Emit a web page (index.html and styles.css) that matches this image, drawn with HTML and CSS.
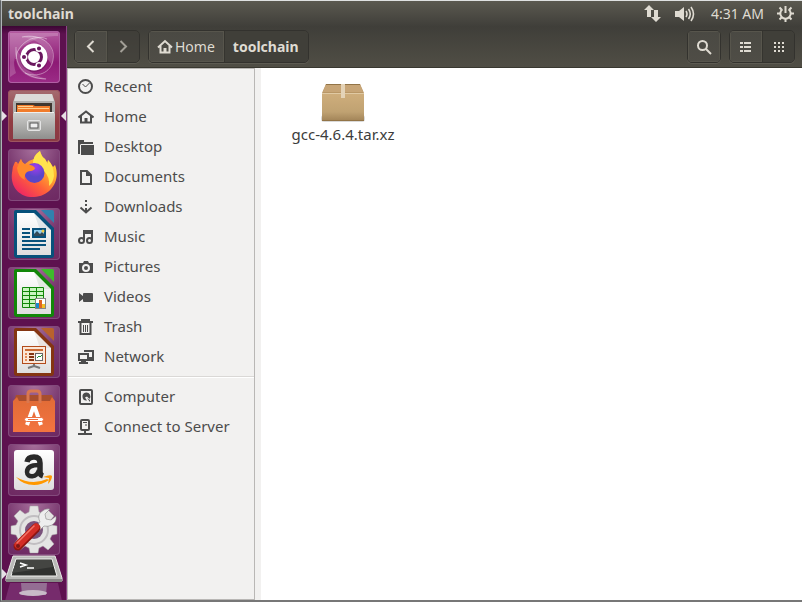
FILE: index.html
```html
<!DOCTYPE html>
<html lang="en">
<head>
    <meta charset="UTF-8">
    <meta name="viewport" content="width=device-width, initial-scale=1.0">
    <title>toolchain</title>
    <link rel="stylesheet" href="styles.css">
</head>
<body>
<div class="screen">

    <!-- Top panel -->
    <header class="panel">
        <h1 class="panel-title">toolchain</h1>
        <svg class="ind-network" width="17" height="17" viewBox="0 0 17 17" fill="#dfdbd2"><path d="M5 0l5 5H7v7H3V5H0zM12 17l-5-5h3V5h4v7h3z"/></svg>
        <svg class="ind-sound" width="20" height="16" viewBox="0 0 20 16"><path fill="#dfdbd2" d="M0 5h4l5-4v14l-5-4H0z"/><path fill="none" stroke="#dfdbd2" stroke-width="1.6" d="M11 5q2 3 0 6M13.500 3q3.500 5 0 10M16 1q5 7 0 14"/></svg>
        <time class="clock">4:31 AM</time>
        <svg class="ind-session" width="17" height="17" viewBox="0 0 17 17" fill="none" stroke="#dfdbd2"><path stroke-width="2" d="M5.500 4.300a5.200 5.200 0 1 0 6 0M8.500 1v7"/><path stroke-width="2" d="M0 8.500h3M14 8.500h3M8.500 14v3M2.500 2.500l2 2M14.500 2.500l-2 2M2.500 14.500l2-2M14.500 14.500l-2-2"/></svg>
    </header>

    <div class="desktop">

        <!-- Launcher -->
        <nav class="launcher">
            <button class="tile tile-dash" aria-label="Search your computer">
                <svg width="52" height="52" viewBox="0 0 52 52">
                    <path fill="#fff" opacity=".2" d="M2 2h48v3Q31 4 15 15 2 26 8 42L2 46z"/>
                    <path fill="none" stroke="#fff" opacity=".4" d="M14 6C32 2 48 13 45 29 43 42 29 47 17 42M8 16C7 36 16 47 38 48M39 8C25 2 8 14 8 28"/>
                    <path fill="#fff" opacity=".18" d="M13 6C34 1 49 14 44 34L39 27C41 17 30 8 13 6zM8 18C5 39 20 50 39 48 22 43 13 35 13 25z"/>
                    <circle cx="26" cy="27" r="14" fill="#500d49" opacity=".35"/>
                    <circle cx="26" cy="26" r="13.500" fill="#fff"/>
                    <circle cx="26" cy="26" r="7.500" fill="none" stroke="#69175e" stroke-width="3"/>
                    <g stroke="#fff" stroke-width="1.500" fill="#69175e"><circle cx="16" cy="26" r="2.800"/><circle cx="31" cy="17.500" r="2.800"/><circle cx="31" cy="34.500" r="2.800"/></g>
                </svg>
            </button>
            <button class="tile tile-files running focused" aria-label="Files">
                <svg width="52" height="52" viewBox="0 0 52 52">
                    <defs>
                        <linearGradient id="metal" x1="0" y1="0" x2="0" y2="1"><stop offset="0" stop-color="#cfcfcd"/><stop offset="1" stop-color="#8f8f8d"/></linearGradient>
                        <linearGradient id="paper" x1="0" y1="0" x2="0" y2="1"><stop offset="0" stop-color="#fff"/><stop offset="1" stop-color="#dedede"/></linearGradient>
                    </defs>
                    <path fill="#b0afad" d="M8 4h36l3 8v35H5V12z"/>
                    <path fill="#dcdbd9" d="M8 4h36l2 7H6z"/>
                    <path fill="#403730" d="M8 13h36v10H8z"/>
                    <path fill="#f17c2b" d="M9 15h16l2 1h15v7H9z"/>
                    <path stroke="#ffd08f" d="M10 16.500h15M10 18.500h31"/>
                    <path fill="url(#metal)" d="M7 22h38l2 2v25H5V24z"/>
                    <path stroke="#efefed" d="M6 22.500h40"/>
                    <rect x="19.500" y="30.500" width="13" height="10" rx="1.500" fill="#bcbcba" stroke="#e4e4e4"/>
                    <rect x="22" y="33" width="8" height="5" fill="#eee" stroke="#555"/>
                </svg>
            </button>
            <button class="tile" aria-label="Firefox">
                <svg width="52" height="52" viewBox="0 0 52 52">
                    <defs>
                        <linearGradient id="fox" x1="1" y1="0" x2="0.200" y2="1"><stop offset="0" stop-color="#fff14b"/><stop offset=".35" stop-color="#ffb52d"/><stop offset=".65" stop-color="#ff6338"/><stop offset="1" stop-color="#ed2167"/></linearGradient>
                        <radialGradient id="globe" cx=".55" cy=".2"><stop offset="0" stop-color="#a03cf0"/><stop offset="1" stop-color="#5a46c8"/></radialGradient>
                    </defs>
                    <path fill="url(#fox)" d="M7 13q2-1 3 2l3-5q1 4 4 5 4-4 9-5Q26 6 32 2q1 5 5 8 1 2 2 4l1-3q3 3 5 7l2-2c6 15-4 31-21 32C12 49 2 38 4 24q0-6 3-11z"/>
                    <path fill="#ffe34e" d="M32 2q1 5 5 8l3 5v-4q6 6 6 16-1 7-5 10 1-9-5-15l-11-8Q25 7 32 2z"/>
                    <circle cx="26.500" cy="24" r="10" fill="url(#globe)"/>
                    <path fill="#ff8a2c" d="M9 19l4-9q1 4 5 6 6-1 9 3 0 2-4 3-5 0-6 4-1 3 0 5-7-3-8-12z"/>
                </svg>
            </button>
            <button class="tile" aria-label="LibreOffice Writer">
                <svg width="52" height="52" viewBox="0 0 52 52">
                    <path fill="#07517b" d="M6 4q0-2 2-2h20l18 18v27q0 3-3 3H9q-3 0-3-3z"/>
                    <path fill="#3181ae" d="M33 2h11q2 0 2 2v11z"/>
                    <path fill="url(#paper)" d="M9 5h17l17 17v25H9z"/>
                    <path fill="#9db5c1" d="M26 5l17 17H32q-3-9-6-17z" opacity=".25"/>
                    <path stroke="#07517b" stroke-width="2" d="M14 21h8M14 25h8M14 29h8M14 33h24M14 37h24M14 41h18"/>
                    <rect x="25" y="21" width="12" height="8" fill="#8fcdf0" stroke="#07517b" stroke-width="2"/><path fill="#354b59" d="M26 28v-2l3-3 3 3 2-2 2 2v2z"/><circle cx="35" cy="23" r="1.500" fill="#efcc46"/>
                </svg>
            </button>
            <button class="tile" aria-label="LibreOffice Calc">
                <svg width="52" height="52" viewBox="0 0 52 52">
                    <path fill="#118708" d="M6 4q0-2 2-2h20l18 18v27q0 3-3 3H9q-3 0-3-3z"/>
                    <path fill="#3ebc2c" d="M33 2h11q2 0 2 2v11z"/>
                    <path fill="url(#paper)" d="M9 5h17l17 17v25H9z"/>
                    <path fill="#a9c5a3" d="M26 5l17 17H32q-3-9-6-17z" opacity=".25"/>
                    <path fill="#c9f4c0" stroke="#118708" d="M14.500 20.500h21v20h-21zM14 24.500h22M14 28.500h22M14 32.500h22M14 36.500h22M21.500 20v21M28.500 20v21"/>
                    <rect x="27.500" y="31.500" width="10" height="10" fill="#fff" stroke="#858585"/><path fill="#188ccd" d="M28 36h3v5h-3z"/><path fill="#df6421" d="M31 33h3v8h-3z"/><path fill="#f0bd25" d="M34 37h3v4h-3z"/>
                </svg>
            </button>
            <button class="tile" aria-label="LibreOffice Impress">
                <svg width="52" height="52" viewBox="0 0 52 52">
                    <path fill="#843512" d="M6 4q0-2 2-2h20l18 18v27q0 3-3 3H9q-3 0-3-3z"/>
                    <path fill="#b9622d" d="M33 2h11q2 0 2 2v11z"/>
                    <path fill="url(#paper)" d="M9 5h17l17 17v25H9z"/>
                    <path fill="#c9b3a3" d="M26 5l17 17H32q-3-9-6-17z" opacity=".25"/>
                    <rect x="14.500" y="20.500" width="23" height="17" fill="#fbe6d6" stroke="#b24b1b"/>
                    <path stroke="#ca6a33" stroke-width="2" d="M17 24h18"/><path stroke="#843512" stroke-width="2" d="M21 28h5M21 31h5M21 34h5"/><path stroke="#e58a56" stroke-width="2" d="M17 28h2M17 31h2M17 34h2"/>
                    <rect x="27.500" y="27.500" width="7" height="7" fill="#fff" stroke="#666"/><path fill="none" stroke="#26943a" d="M29 32l2-2 1 1 2-2"/>
                    <path fill="none" stroke="#777" stroke-width="2" d="M26 38v2l-6 2M26 40l6 2"/>
                </svg>
            </button>
            <button class="tile" aria-label="Ubuntu Software">
                <svg width="52" height="52" viewBox="0 0 52 52">
                    <defs><linearGradient id="bag" x1="0" y1="0" x2="0" y2="1"><stop offset="0" stop-color="#e06b36"/><stop offset="1" stop-color="#f37440"/></linearGradient></defs>
                    <path fill="#a84e2e" d="M8 10h36l3 9H5z"/>
                    <path fill="url(#bag)" d="M5 16l4-4 2 4h31l2-4 3 4v31H5z"/>
                    <path fill="none" stroke="#d9774f" stroke-width="3" d="M20 18V9q0-3 3-3h6q3 0 3 3v9"/>
                    <path fill="none" stroke="#fff" stroke-width="4" d="M19 40l6-17h2l6 17"/>
                    <rect x="16.500" y="32.500" width="19" height="4" rx="2" fill="#fff" stroke="#ee7040"/><path stroke="#ee7040" d="M20 34.500h10"/>
                </svg>
            </button>
            <button class="tile" aria-label="Amazon">
                <svg width="52" height="52" viewBox="0 0 52 52">
                    <rect x="6" y="6" width="40" height="40" rx="3" fill="url(#paper)"/>
                    <path fill="none" stroke="#292929" stroke-width="5.500" d="M19 18q1-5 7-5 6 0 6 6v9q0 3 3 4"/>
                    <path fill="none" stroke="#292929" stroke-width="4.500" d="M31 21c-8 0-12 2-12 7 0 6 10 6 12-2"/>
                    <path fill="#ff9800" d="M8 33q16 9 31 2l2 1q-7 5-15 5-11 0-18-8z"/>
                    <path fill="#ff9800" d="M35 33q8-3 9-1 0 4-4 8l1-6z"/>
                </svg>
            </button>
            <button class="tile" aria-label="System Settings">
                <svg width="52" height="52" viewBox="0 0 52 52">
                    <path fill="#e4e4e3" stroke="#aaa" stroke-width=".5" d="M22 3h8l1 6 4 2 5-4 6 6-4 5 2 4 5 1v8l-5 1-2 4 4 5-6 6-5-4-4 2-1 5h-8l-1-5-4-2-5 4-6-6 4-5-2-4-5-1v-8l5-1 2-4-4-5 6-6 5 4 4-2z"/>
                    <circle cx="26" cy="27" r="14" fill="none" stroke="#c1bec1" stroke-width="2"/>
                    <circle cx="26" cy="27" r="9" fill="#79517a"/>
                    <path fill="#eee" stroke="#777" stroke-width=".5" d="M27 25l5-6q-3-6 1-10 4-4 9-3l-5 5 1 5 5 1 5-4q1 6-4 9-4 2-8 1l-5 5z"/>
                    <path stroke="#8e1410" stroke-width="9" stroke-linecap="round" d="M10 43l18-18"/>
                    <path stroke="#d42d25" stroke-width="7" stroke-linecap="round" d="M10 42l18-18"/>
                    <path stroke="#f17469" stroke-width="1.500" stroke-linecap="round" d="M9 40l17-17"/>
                    <circle cx="10" cy="43" r="2" fill="#7b1817"/>
                </svg>
            </button>
            <button class="tile-folded running" aria-label="Terminal">
                <svg width="58" height="46" viewBox="0 0 58 46">
                    <path fill="#b9b9b7" stroke="#e5e5e3" d="M8 1h42l7 22v3H1v-3z"/>
                    <path fill="#888886" d="M1 24h56v3H1z"/>
                    <path fill="#30312f" stroke="#f1f1ef" d="M11 4h36l5 17H6z"/>
                    <path fill="#444542" d="M12 5h34l2 7-41 6z"/>
                    <path fill="none" stroke="#fff" stroke-width="1.500" d="M15 8l6 2-6 2M22 13h7"/>
                    <path fill="#873d80" opacity=".6" d="M5 28h48l4 18H0z"/>
                    <path fill="#9c809d" d="M16 28h26l-1 12H17z" opacity=".8"/>
                    <ellipse cx="28" cy="38" rx="14" ry="3" fill="#c8bac8"/>
                </svg>
            </button>
        </nav>

        <!-- File manager -->
        <div class="window">
            <div class="toolbar">
                <div class="btn-group">
                    <button class="btn" aria-label="Back"><svg width="16" height="16" viewBox="0 0 16 16"><path class="line" d="M10.500 2L5 7.500l5.500 5.500"/></svg></button>
                    <button class="btn pressed" aria-label="Forward" disabled><svg width="16" height="16" viewBox="0 0 16 16"><path class="line" d="M4.500 2L10 7.500 4.500 13"/></svg></button>
                </div>
                <div class="btn-group path-bar">
                    <button class="btn btn-text"><svg width="16" height="16" viewBox="0 0 16 16"><path class="line" d="M1 8.500L8 2l7 6.500M3.500 7v6.500h9V7"/><path fill="#dfdbd2" d="M6.500 9h3v5h-3z"/></svg>Home</button>
                    <button class="btn btn-text pressed current">toolchain</button>
                </div>
                <div class="btn-group search">
                    <button class="btn" aria-label="Search"><svg width="16" height="16" viewBox="0 0 16 16"><circle class="line" cx="6.500" cy="6.500" r="4.500"/><path class="line" d="M10 10l5 5"/></svg></button>
                </div>
                <div class="btn-group">
                    <button class="btn" aria-label="List view"><svg width="16" height="16" viewBox="0 0 16 16" fill="#dfdbd2"><path d="M2 3h3v2H2zM6 3h7v2H6zM2 7h3v2H2zM6 7h7v2H6zM2 11h3v2H2zM6 11h7v2H6z"/></svg></button>
                    <button class="btn pressed" aria-label="Icon view"><svg width="16" height="16" viewBox="0 0 16 16" fill="#dfdbd2"><path d="M3 3h2v2H3zM7 3h2v2H7zM11 3h2v2h-2zM3 7h2v2H3zM7 7h2v2H7zM11 7h2v2h-2zM3 11h2v2H3zM7 11h2v2H7zM11 11h2v2h-2z"/></svg></button>
                </div>
            </div>

            <div class="content">
                <aside class="sidebar">
                    <ul class="places">
                        <li><a href="#"><svg width="16" height="16" viewBox="0 0 16 16"><circle class="ink" cx="7.500" cy="7.500" r="6.500"/><path class="ink thin" d="M4.500 5l3 3 4-4"/></svg>Recent</a></li>
                        <li><a href="#"><svg width="16" height="16" viewBox="0 0 16 16"><path class="ink" d="M.5 8.500L8 2.500l7.500 6M3 7v6.500h10V7"/><path d="M6.500 9h3v5h-3z"/></svg>Home</a></li>
                        <li><a href="#"><svg width="16" height="16" viewBox="0 0 16 16"><path d="M0 1h6v2h9v2H3L2 6v9H0z"/><path d="M3 6h13v10H3z"/></svg>Desktop</a></li>
                        <li><a href="#"><svg width="16" height="16" viewBox="0 0 16 16"><path class="ink" d="M3 2h6l4 4v9H3z"/><path d="M8 1l6 6H8z"/></svg>Documents</a></li>
                        <li><a href="#"><svg width="16" height="16" viewBox="0 0 16 16"><path d="M7 1h2v2H7zM7 5h2v2H7zM7 9h2v4H7z"/><path class="ink" d="M2.500 8.500L8 13.500l5.500-5"/></svg>Downloads</a></li>
                        <li><a href="#"><svg width="16" height="16" viewBox="0 0 16 16"><path class="ink" d="M6 11V2h8v9M6 4h8"/><circle class="ink" cx="3.500" cy="11.500" r="2.500"/><circle class="ink" cx="11.500" cy="11.500" r="2.500"/></svg>Music</a></li>
                        <li><a href="#"><svg width="16" height="16" viewBox="0 0 16 16"><path fill-rule="evenodd" d="M1 4h4l1-2h4l1 2h4v10H1zM8 5a4 4 0 1 0 0 8 4 4 0 0 0 0-8zM8 7a2 2 0 1 1 0 4 2 2 0 0 1 0-4z"/></svg>Pictures</a></li>
                        <li><a href="#"><svg width="16" height="16" viewBox="0 0 16 16"><path d="M1 4l4 3V5q0-1 1-1h8q1 0 1 1v7q0 1-1 1H6q-1 0-1-1v-2l-4 3z"/></svg>Videos</a></li>
                        <li><a href="#"><svg width="16" height="16" viewBox="0 0 16 16"><path class="ink" d="M0 3h15M3 1h9M2.500 4v11h10V4"/><path class="ink thin" d="M5.500 6v7M7.500 6v7M9.500 6v7"/></svg>Trash</a></li>
                        <li><a href="#"><svg width="16" height="16" viewBox="0 0 16 16"><path class="ink" d="M1 5h9v6H1zM7 3V2h8v7h-4"/><path d="M3 12h5v1h2v2H1v-2h2zM11 10h5v2h-5z"/></svg>Network</a></li>
                    </ul>
                    <ul class="places">
                        <li><a href="#"><svg width="16" height="16" viewBox="0 0 16 16"><rect class="ink" x="2" y="1" width="12" height="14" rx="1"/><path d="M8 3.500a4 4 0 1 0 1 8l-2-3 2-1 2.500 2.500A4 4 0 0 0 8 3.500zM9 9l3 2v2z"/></svg>Computer</a></li>
                        <li><a href="#"><svg width="16" height="16" viewBox="0 0 16 16"><rect class="ink" x="3" y="1" width="8" height="10" rx="1"/><path class="ink" d="M7 11v3M0 15h14"/><path class="ink thin" d="M5 3.500h4M7 6h2"/></svg>Connect to Server</a></li>
                    </ul>
                </aside>
                <main class="files">
                    <a class="file" href="#">
                        <svg width="46" height="42" viewBox="0 0 46 42">
                            <defs><linearGradient id="box" x1="0" y1="0" x2="0" y2="1"><stop offset="0" stop-color="#cfae7c"/><stop offset=".7" stop-color="#c0a272"/><stop offset="1" stop-color="#a4865a"/></linearGradient></defs>
                            <rect x="1" y="33" width="44" height="7" rx="3" fill="#000" opacity=".15"/>
                            <path fill="#b99766" d="M6 2h34l4 9v27q0 1-1 1H3q-1 0-1-1V11z"/>
                            <path fill="#c7a577" d="M6 2h34l3 8H3z"/>
                            <path fill="url(#box)" d="M2 11h42v27H2z"/>
                            <path stroke="#e0c9a3" d="M2 11.500h42"/>
                            <path stroke="#927447" d="M2 38.500h42M6 2.500h34"/>
                            <path fill="#e4d3b7" d="M21 2h4v14h-4z"/>
                        </svg>
                        gcc-4.6.4.tar.xz
                    </a>
                </main>
            </div>
        </div>
    </div>
</div>
</body>
</html>
```
FILE: styles.css
```css
* {
    box-sizing: border-box;
}
body {
    margin: 0;
    font-family: "Noto Sans", "Open Sans", sans-serif;
    font-size: 14px;
    color: #4c4c4c;
}
button {
    font: inherit;
    color: inherit;
    padding: 0;
    border: none;
    cursor: pointer;
}
a {
    color: inherit;
    text-decoration: none;
}
svg {
    display: block;
    flex: none;
}
.screen {
    display: flex;
    flex-direction: column;
    height: 100vh;
    border-top: 1px solid #dfe1e1;
    border-left: 2px groove #aeb3b7;
    border-bottom: 2px solid #777;
}

/* Top panel */
.panel {
    display: flex;
    align-items: center;
    flex: none;
    height: 25px;
    padding: 0 8px 0 6px;
    background: linear-gradient(#5b5950, #403f3a);
    color: #dfdbd2;
}
.panel-title {
    margin: 0 auto 0 0;
    font-size: 14px;
    font-weight: bold;
}
.ind-sound {
    margin: 0 16px 0 14px;
}
.clock {
    margin-right: 13px;
}

.desktop {
    display: flex;
    flex: 1;
    min-height: 0;
}

/* Launcher */
.launcher {
    display: flex;
    flex-direction: column;
    align-items: center;
    gap: 7px;
    flex: none;
    width: 65px;
    padding-top: 5px;
    overflow: hidden;
    background: linear-gradient(#3c0634, #5d114f 8px);
    border-right: 1px solid #8d4386;
}
.tile, .tile-folded {
    position: relative;
    flex: none;
}
.tile {
    width: 52px;
    height: 52px;
    border-radius: 4px;
    background: radial-gradient(circle at 50% 0, #a7709c, #78376e 50%, #6d2861);
    box-shadow: inset 0 0 0 1px #834a7c;
}
.tile-dash {
    background: linear-gradient(#b45ba0, #8d1a75 60%, #9c2c87);
    box-shadow: inset 0 0 0 1px #b061a4;
}
.tile-files {
    background: linear-gradient(#a56b70, #913c42 60%, #8a3944);
    box-shadow: inset 0 0 0 1px #9d5560;
}
.tile-folded {
    margin-top: -7px;
    background: none;
}
.running::before, .focused::after {
    content: "";
    position: absolute;
    top: 50%;
    margin-top: -5px;
    border: 5px solid transparent;
}
.running::before {
    left: -6px;
    border-left-color: #e6dfe5;
    border-right: none;
}
.tile-folded.running::before {
    left: -3px;
    margin-top: -9px;
}
.focused::after {
    right: -6px;
    border-right-color: #e6dfe5;
    border-left: none;
}

/* Toolbar */
.window {
    display: flex;
    flex-direction: column;
    flex: 1;
    min-width: 0;
}
.toolbar {
    display: flex;
    align-items: flex-start;
    gap: 8px;
    flex: none;
    height: 42px;
    padding: 4px 7px 0;
    background: linear-gradient(#3f3e39, #504e45);
    border-bottom: 1px solid #393830;
    color: #dfdbd2;
}
.btn-group {
    display: flex;
    border: 1px solid #33322e;
    border-radius: 5px;
    overflow: hidden;
    box-shadow: 0 1px 0 #5d5b52;
}
.search {
    margin-left: auto;
}
.btn {
    display: flex;
    align-items: center;
    justify-content: center;
    width: 32px;
    height: 31px;
    background: linear-gradient(#4a4943, #4f4d46);
    box-shadow: inset 0 0 0 1px #57554c;
}
.btn.pressed {
    background: #403f39;
    border-left: 1px solid #35342f;
    box-shadow: none;
}
.btn-text {
    width: auto;
    padding: 0 9px 0 8px;
    gap: 2px;
}
.current {
    font-weight: bold;
}
.btn:disabled {
    opacity: 0.6;
}
.line {
    fill: none;
    stroke: #dfdbd2;
    stroke-width: 2;
}

/* Sidebar */
.content {
    display: flex;
    flex: 1;
    min-height: 0;
    background: #f2f1f0;
    font-size: 15px;
}
.sidebar {
    flex: none;
    width: 188px;
    border: 1px solid #b9b7b5;
    color: #4c4c4c;
}
.places {
    list-style: none;
    margin: 0;
    padding: 2px 0 5px;
}
.places + .places {
    border-top: 1px solid #dad8d6;
    box-shadow: inset 0 1px 0 #fff;
    padding-top: 4px;
}
.places a {
    display: flex;
    align-items: center;
    gap: 10px;
    height: 30px;
    padding-left: 10px;
}
.places svg {
    margin-top: 2px;
    fill: #4c4c4c;
}
.places .ink {
    fill: none;
    stroke: #4c4c4c;
    stroke-width: 2;
}
.places .thin {
    stroke-width: 1;
}

/* Files */
.files {
    flex: 1;
    margin-left: 6px;
    padding: 14px 24px;
    background: #fff;
}
.file {
    display: inline-flex;
    flex-direction: column;
    align-items: center;
    width: 116px;
    color: #3c3c3c;
}
```
